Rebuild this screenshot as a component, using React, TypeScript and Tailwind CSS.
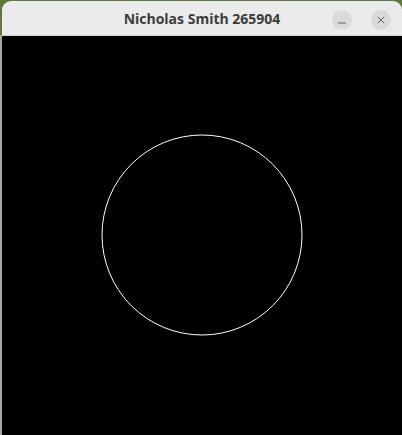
import { X, Minus } from "lucide-react";

export default function App() {
  return (
    <div className="flex h-[435px] w-[402px] bg-[#5d7a3c] pt-px">
      {/* desktop edge peeking out on the left */}
      <div className="flex w-[2px] flex-col">
        <div className="h-[34px] bg-[#5d7a3c]" />
        <div className="flex-1 bg-[#a9a9a9]" />
      </div>

      {/* window */}
      <div className="flex flex-1 flex-col overflow-hidden rounded-t-[9px]">
        <div className="relative flex h-[35px] items-center justify-center border-b border-[#d6d6d6] bg-[#ebebeb]">
          <span className="font-['Open_Sans',sans-serif] text-[14px] font-bold text-[#3c3c3c]">
            Nicholas Smith 265904
          </span>
          <div className="absolute right-[11px] top-[9px] flex gap-[19px]">
            <div className="flex h-[20px] w-[20px] items-center justify-center rounded-full bg-[#dadada] text-[#3c3c3c]">
              <Minus size={12} strokeWidth={1.5} className="translate-y-[3px]" />
            </div>
            <div className="flex h-[20px] w-[20px] items-center justify-center rounded-full bg-[#dadada] text-[#3c3c3c]">
              <X size={12} strokeWidth={1.5} />
            </div>
          </div>
        </div>

        {/* canvas */}
        <div className="flex-1 bg-black">
          <svg width="400" height="398" viewBox="0 0 400 398">
            <circle cx="200" cy="199" r="100" fill="none" stroke="white" strokeWidth="1" />
          </svg>
        </div>
      </div>
    </div>
  );
}
